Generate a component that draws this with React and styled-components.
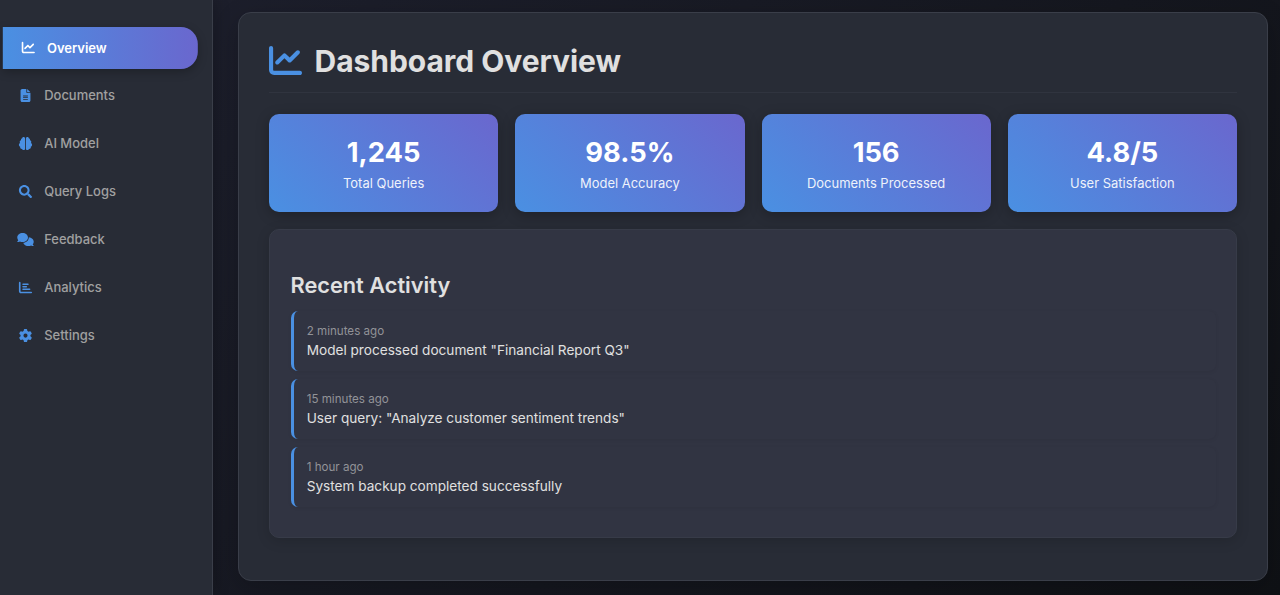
import React from 'react';
import styled, { createGlobalStyle, css } from 'styled-components';
import {
  FaChartLine,
  FaFileLines,
  FaComments,
  FaChartBar,
  FaGear,
} from 'react-icons/fa6';
import { FaSearch } from 'react-icons/fa';

const GlobalStyle = createGlobalStyle`
  *, *::before, *::after { box-sizing: border-box; }
  html, body { margin: 0; padding: 0; }
  body {
    font-family: Inter, "Liberation Sans", sans-serif;
    color: #e0e0e0;
    overflow: hidden;
  }
`;

const Page = styled.div`
  display: flex;
  height: 595px;
  background: linear-gradient(135deg, #1e202e 0%, #0f1115 100%);
`;

const Sidebar = styled.nav`
  flex: none;
  display: flex;
  flex-direction: column;
  gap: 5.95px;
  width: 213px;
  padding: 26.5px 17px 0 0;
  background: #282c36;
  border-right: 1px solid #3a3e49;
  box-shadow: 3px 0 13px rgba(0, 0, 0, 0.2);
`;

const MenuItem = styled.a`
  display: flex;
  align-items: center;
  gap: 10.2px;
  height: 42px;
  padding-left: 17px;
  border-radius: 0 17px 17px 0;
  font-size: 12.97px;
  font-weight: 500;
  color: #a0a0a0;

  svg {
    width: 17px;
    height: 13.2px;
    color: #4a90e2;
  }

  ${({ $active }) =>
    $active &&
    css`
      transform: translateX(2.8px);
      font-weight: 600;
      color: #fff;
      background: linear-gradient(90deg, #4a90e2, #6a67ce);
      box-shadow: 0 3px 10px rgba(0, 0, 0, 0.25);

      svg {
        color: #fff;
      }
    `}
`;

const Main = styled.main`
  flex: 1;
  min-width: 0;
  padding: 12px 12px 14px 25px;
`;

const Panel = styled.section`
  height: 569px;
  padding: 30px;
  background: #282c36;
  border: 1px solid #3a3e49;
  border-radius: 13px;
  box-shadow: 0 7px 26px rgba(0, 0, 0, 0.2);
`;

const Title = styled.h1`
  display: flex;
  align-items: center;
  gap: 12.6px;
  height: 50px;
  margin: 0 0 20.5px;
  padding-bottom: 13px;
  border-bottom: 1px solid #30343f;
  font-size: 30px;
  font-weight: 700;
  letter-spacing: -0.05px;
  line-height: 36px;

  svg {
    width: 33px;
    height: 33px;
    margin-bottom: 1px;
    color: #4a90e2;
  }
`;

const Stats = styled.div`
  display: grid;
  grid-template-columns: repeat(4, 1fr);
  gap: 17px;
  margin-bottom: 17px;
`;

const StatCard = styled.article`
  display: flex;
  flex-direction: column;
  align-items: center;
  height: 98.5px;
  padding-top: 21px;
  border-radius: 10px;
  background: linear-gradient(45deg, #4a90e2, #6a67ce);
  box-shadow: 0 3px 13px rgba(0, 0, 0, 0.25);
  color: #fff;
`;

const StatValue = styled.div`
  font-size: 27.3px;
  font-weight: 700;
  line-height: 35px;
`;

const StatLabel = styled.div`
  margin-top: 3px;
  font-size: 12.97px;
  line-height: 20px;
  opacity: 0.9;
`;

const Activity = styled.section`
  height: 309px;
  padding: 40px 20.5px 0;
  background: #313442;
  border: 1px solid #373b48;
  border-radius: 10px;
  box-shadow: 0 3px 13px rgba(0, 0, 0, 0.15);
`;

const SectionTitle = styled.h2`
  margin: 0 0 9.7px;
  font-size: 21.75px;
  font-weight: 600;
  line-height: 31px;
`;

const ActivityItem = styled.div`
  height: 60px;
  margin-bottom: 8.3px;
  padding: 11px 13.2px 0;
  border-left: 3.4px solid #4a90e2;
  border-radius: 7px;
  background: #313442;
  box-shadow: 0 1px 4px rgba(0, 0, 0, 0.06);
`;

const Time = styled.div`
  font-size: 11.6px;
  line-height: 18px;
  color: #929398;
`;

const Message = styled.div`
  font-size: 13.62px;
  line-height: 20px;
`;

const lobe =
  'M184 0C214.900 0 240 25.100 240 56V456C240 486.900 214.900 512 184 512C155.100 512 131.300 490.100 128.300 461.900C123.100 463.300 117.600 464 112 464C76.700 464 48 435.300 48 400C48 392.600 49.300 385.400 51.600 378.800C21.400 367.400 0 338.200 0 304C0 272.100 18.700 244.500 45.800 231.700C37.100 220.800 32 207 32 192C32 161.300 53.600 135.700 82.400 129.400C80.800 123.900 80 118 80 112C80 82.100 100.600 56.900 128.300 49.900C131.300 21.900 155.100 0 184 0Z';

const BrainIcon = () => (
  <svg viewBox="0 0 512 512" fill="currentColor" aria-hidden="true">
    <path d={lobe} />
    <path transform="matrix(-1 0 0 1 512 0)" d={lobe} />
  </svg>
);

const menu = [
  { label: 'Overview', icon: FaChartLine, active: true },
  { label: 'Documents', icon: FaFileLines },
  { label: 'AI Model', icon: BrainIcon },
  { label: 'Query Logs', icon: FaSearch },
  { label: 'Feedback', icon: FaComments },
  { label: 'Analytics', icon: FaChartBar },
  { label: 'Settings', icon: FaGear },
];

const stats = [
  ['1,245', 'Total Queries'],
  ['98.5%', 'Model Accuracy'],
  ['156', 'Documents Processed'],
  ['4.8/5', 'User Satisfaction'],
];

const activity = [
  ['2 minutes ago', 'Model processed document "Financial Report Q3"'],
  ['15 minutes ago', 'User query: "Analyze customer sentiment trends"'],
  ['1 hour ago', 'System backup completed successfully'],
];

export default function App() {
  return (
    <>
      <GlobalStyle />
      <Page>
        <Sidebar>
          {menu.map(({ label, icon: Icon, active }) => (
            <MenuItem key={label} $active={active}>
              <Icon />
              {label}
            </MenuItem>
          ))}
        </Sidebar>
        <Main>
          <Panel>
            <Title>
              <FaChartLine />
              Dashboard Overview
            </Title>
            <Stats>
              {stats.map(([value, label]) => (
                <StatCard key={label}>
                  <StatValue>{value}</StatValue>
                  <StatLabel>{label}</StatLabel>
                </StatCard>
              ))}
            </Stats>
            <Activity>
              <SectionTitle>Recent Activity</SectionTitle>
              {activity.map(([time, message]) => (
                <ActivityItem key={time}>
                  <Time>{time}</Time>
                  <Message>{message}</Message>
                </ActivityItem>
              ))}
            </Activity>
          </Panel>
        </Main>
      </Page>
    </>
  );
}
